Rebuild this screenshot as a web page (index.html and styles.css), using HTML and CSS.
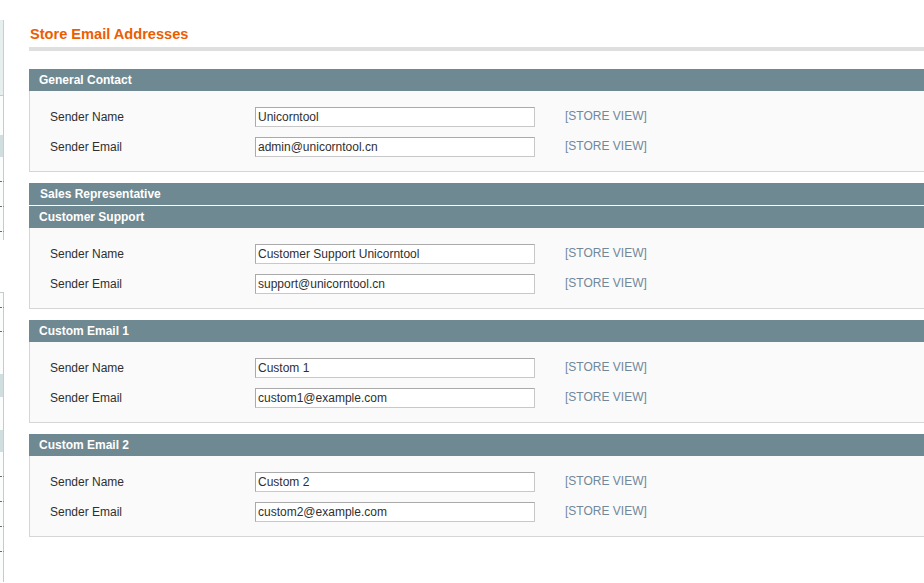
FILE: index.html
```html
<!DOCTYPE html>
<html>
<head>
<meta charset="utf-8">
<title>Store Email Addresses</title>
<link rel="stylesheet" href="styles.css">
</head>
<body>
<div class="page">
  <aside class="sidebar">
    <div class="sb sb-gap h20"></div>
    <div class="sb sb-tint h75 bb"></div>
    <div class="sb sb-plain h39"></div>
    <div class="sb sb-active h22"></div>
    <div class="sb sb-plain h25 dot"></div>
    <div class="sb sb-plain h25 dot"></div>
    <div class="sb sb-plain h25 dot"></div>
    <div class="sb sb-plain h8"></div>
    <div class="sb sb-gap h52"></div>
    <div class="sb sb-plain h16 dot bt"></div>
    <div class="sb sb-plain h24 dot"></div>
    <div class="sb sb-plain h42"></div>
    <div class="sb sb-active h23"></div>
    <div class="sb sb-plain h33"></div>
    <div class="sb sb-active h22"></div>
    <div class="sb sb-plain h25 dot"></div>
    <div class="sb sb-plain h25 dot"></div>
    <div class="sb sb-plain h25 dot"></div>
    <div class="sb sb-plain h25 dot"></div>
    <div class="sb sb-plain h30"></div>
  </aside>

  <main class="main">
    <div class="content-header">
      <h3 class="page-title">Store Email Addresses</h3>
    </div>

    <section class="section">
      <div class="section-head">General Contact</div>
      <div class="fieldset">
        <div class="row">
          <label class="label">Sender Name</label>
          <input class="input" type="text" value="Unicorntool">
          <span class="scope">[STORE VIEW]</span>
        </div>
        <div class="row">
          <label class="label">Sender Email</label>
          <input class="input" type="text" value="admin@unicorntool.cn">
          <span class="scope">[STORE VIEW]</span>
        </div>
      </div>
    </section>

    <section class="section collapsed">
      <div class="section-head link">Sales Representative</div>
    </section>

    <section class="section">
      <div class="section-head">Customer Support</div>
      <div class="fieldset">
        <div class="row">
          <label class="label">Sender Name</label>
          <input class="input" type="text" value="Customer Support Unicorntool">
          <span class="scope">[STORE VIEW]</span>
        </div>
        <div class="row">
          <label class="label">Sender Email</label>
          <input class="input" type="text" value="support@unicorntool.cn">
          <span class="scope">[STORE VIEW]</span>
        </div>
      </div>
    </section>

    <section class="section">
      <div class="section-head">Custom Email 1</div>
      <div class="fieldset">
        <div class="row">
          <label class="label">Sender Name</label>
          <input class="input" type="text" value="Custom 1">
          <span class="scope">[STORE VIEW]</span>
        </div>
        <div class="row">
          <label class="label">Sender Email</label>
          <input class="input" type="text" value="custom1@example.com">
          <span class="scope">[STORE VIEW]</span>
        </div>
      </div>
    </section>

    <section class="section">
      <div class="section-head">Custom Email 2</div>
      <div class="fieldset">
        <div class="row">
          <label class="label">Sender Name</label>
          <input class="input" type="text" value="Custom 2">
          <span class="scope">[STORE VIEW]</span>
        </div>
        <div class="row">
          <label class="label">Sender Email</label>
          <input class="input" type="text" value="custom2@example.com">
          <span class="scope">[STORE VIEW]</span>
        </div>
      </div>
    </section>
  </main>
</div>
</body>
</html>
```

FILE: styles.css
```css
html, body {
  margin: 0;
  padding: 0;
  background: #ffffff;
}

body {
  font-family: "Liberation Sans", Arial, sans-serif;
  font-size: 12px;
  color: #2f2f2f;
}

.page {
  display: flex;
  width: 924px;
  height: 583px;
  overflow: hidden;
}

/* cut-off left navigation */
.sidebar {
  flex: none;
  width: 4px;
  display: flex;
  flex-direction: column;
}

.sb {
  flex: none;
  box-sizing: border-box;
  width: 4px;
}

.sb-gap { background: #ffffff; }
.sb-tint { background: #e6eeee; border-right: 1px solid #c3d0d0; }
.sb-plain { background: #fbfcfc; border-right: 1px solid #c3cccc; }
.sb-active { background: #d1dedf; border-right: 1px solid #c3d0d0; }
.sb.bb { border-bottom: 1px solid #c3cccc; }
.sb.bt { border-top: 1px solid #c3cccc; }
.sb.dot { border-bottom: 1px dotted #6b6b6b; }

.h8 { height: 8px; }
.h16 { height: 16px; }
.h20 { height: 20px; }
.h22 { height: 22px; }
.h23 { height: 23px; }
.h24 { height: 24px; }
.h25 { height: 25px; }
.h30 { height: 30px; }
.h33 { height: 33px; }
.h39 { height: 39px; }
.h42 { height: 42px; }
.h52 { height: 52px; }
.h75 { height: 76px; }

/* main content */
.main {
  flex: none;
  width: 1000px;
  margin-left: 25px;
  padding-top: 25px;
}

.content-header {
  border-bottom: 4px solid #dfdfdf;
  padding-bottom: 4px;
  margin-bottom: 18px;
}

.page-title {
  margin: 0 0 0 1px;
  font-size: 14.6px;
  line-height: 18px;
  font-weight: bold;
  color: #eb5e00;
}

.section {
  margin-bottom: 11px;
}

.section.collapsed {
  margin-bottom: 1px;
}

.section-head {
  height: 22px;
  line-height: 22px;
  padding-left: 10px;
  background: #6f8992;
  color: #ffffff;
  font-weight: bold;
  font-size: 12px;
}

.section-head.link {
  padding-left: 11px;
}

.fieldset {
  background: #fafafa;
  border: 1px solid #d6d6d6;
  border-top: 0;
  padding: 16px 0 14px 20px;
  display: flex;
  flex-direction: column;
  gap: 10px;
}

.row {
  display: flex;
  align-items: flex-start;
  height: 20px;
}

.label {
  flex: none;
  width: 205px;
  line-height: 20px;
  color: #2f2f2f;
}

.input {
  flex: none;
  box-sizing: border-box;
  width: 280px;
  height: 20px;
  margin: 0;
  padding: 0 2px;
  border: 1px solid;
  border-color: #aaaaaa #c8c8c8 #c8c8c8 #aaaaaa;
  background: #ffffff;
  font-family: "Liberation Sans", Arial, sans-serif;
  font-size: 12px;
  color: #2f2f2f;
  outline: none;
}

.scope {
  flex: none;
  margin-left: 30px;
  line-height: 18px;
  color: #72889a;
  font-size: 12px;
}
```
